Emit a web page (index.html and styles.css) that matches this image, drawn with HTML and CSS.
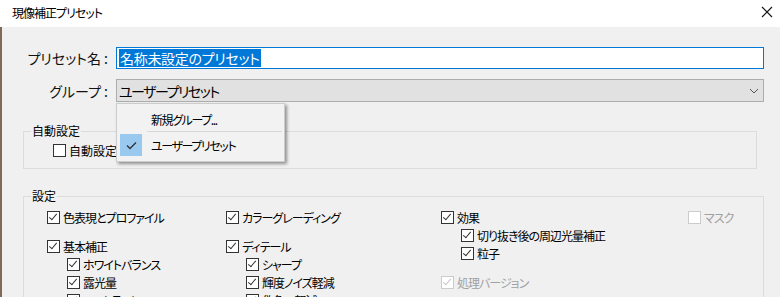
FILE: index.html
```html
<!DOCTYPE html>
<html>

<head>
  <meta charset="utf-8">
  <title>現像補正プリセット</title>
  <link rel="stylesheet" href="styles.css">
</head>

<body>
  <div class="titlebar">
    <span class="title">現像補正プリセット</span>
    <svg class="close" width="12" height="12" viewBox="0 0 12 12">
      <path d="M1 1 L11 11 M11 1 L1 11" stroke="#111" stroke-width="1.1" fill="none" />
    </svg>
  </div>

  <div class="content">
    <div class="form-row row-name">
      <span class="form-label">プリセット名 :</span>
      <div class="field field-input"><span class="selected">名称未設定のプリセット</span></div>
    </div>

    <div class="form-row row-group">
      <span class="form-label">グループ :</span>
      <div class="field field-select">
        <span>ユーザープリセット</span>
        <svg class="chevron" width="10" height="6" viewBox="0 0 10 6">
          <path d="M1 1 L5 5 L9 1" stroke="#555" stroke-width="1" fill="none" />
        </svg>
      </div>

      <div class="menu">
        <div class="menu-item"><span class="menu-mark"></span>新規グループ...</div>
        <div class="menu-sep"></div>
        <div class="menu-item">
          <span class="menu-mark active">
            <svg width="11" height="9" viewBox="0 0 11 9">
              <path d="M1 4.5 L4 7.5 L10 1.5" stroke="#333" stroke-width="1.3" fill="none" />
            </svg>
          </span>ユーザープリセット
        </div>
      </div>
    </div>

    <fieldset class="group group-auto">
      <legend>自動設定</legend>
      <label class="check"><span class="cb"></span>自動設定</label>
    </fieldset>

    <fieldset class="group group-settings">
      <legend>設定</legend>
      <div class="cols">
        <div class="col col-1">
          <label class="check"><span class="cb on"></span>色表現とプロファイル</label>
          <label class="check top-gap"><span class="cb on"></span>基本補正</label>
          <label class="check sub"><span class="cb on"></span>ホワイトバランス</label>
          <label class="check sub"><span class="cb on"></span>露光量</label>
          <label class="check sub"><span class="cb on"></span>コントラスト</label>
        </div>
        <div class="col col-2">
          <label class="check"><span class="cb on"></span>カラーグレーディング</label>
          <label class="check top-gap"><span class="cb on"></span>ディテール</label>
          <label class="check sub"><span class="cb on"></span>シャープ</label>
          <label class="check sub"><span class="cb on"></span>輝度ノイズ軽減</label>
          <label class="check sub"><span class="cb on"></span>偽色の軽減</label>
        </div>
        <div class="col col-3">
          <label class="check"><span class="cb on"></span>効果</label>
          <label class="check sub"><span class="cb on"></span>切り抜き後の周辺光量補正</label>
          <label class="check sub"><span class="cb on"></span>粒子</label>
          <label class="check top-gap disabled"><span class="cb on"></span>処理バージョン</label>
        </div>
        <div class="col col-4">
          <label class="check disabled"><span class="cb"></span>マスク</label>
        </div>
      </div>
    </fieldset>
  </div>
</body>

</html>
```

FILE: styles.css
```css
body {
  margin: 0;
  width: 780px;
  height: 297px;
  overflow: hidden;
  background-color: #f0f0f0;
  font-family: "Noto Sans CJK JP", "Noto Sans", sans-serif;
  font-feature-settings: "palt";
  font-size: 12px;
  color: #000;
}

.titlebar {
  height: 27px;
  background-color: #fff;
  display: flex;
  align-items: center;
  justify-content: space-between;
  padding: 0 7px 0 12px;
}

.title {
  font-size: 12px;
  letter-spacing: -1px;
  margin-top: -2px;
}

.close {
  margin-top: -3px;
}

.content {
  border-left: 2px solid #7d6b58;
  height: 270px;
  overflow: hidden;
}

.form-row {
  display: flex;
  align-items: center;
  position: relative;
}

.row-name {
  margin-top: 20px;
}

.row-group {
  margin-top: 10px;
}

.form-label {
  width: 106px;
  text-align: right;
  margin-right: 8px;
  font-size: 14px;
  color: #111;
}

.field {
  height: 20px;
  display: flex;
  align-items: center;
  font-size: 14px;
}

.field-input {
  background-color: #fff;
  border: 1px solid #0078d7;
  padding-left: 2px;
  width: 644px;
  letter-spacing: -0.3px;
}

.selected {
  background-color: #0078d7;
  color: #fff;
  line-height: 18px;
  padding: 0 1px;
}

.field-select {
  background-color: #e1e1e1;
  border: 1px solid #adadad;
  height: 21px;
  padding-left: 2px;
  width: 644px;
  justify-content: space-between;
  letter-spacing: -1.5px;
}

.chevron {
  margin-right: 4px;
}

.menu {
  position: absolute;
  left: 114px;
  top: 24px;
  width: 167px;
  height: 57px;
  background-color: #f2f2f2;
  border: 1px solid #cccccc;
  box-shadow: 2px 2px 3px rgba(0, 0, 0, 0.4);
  z-index: 2;
}

.menu-item {
  display: flex;
  align-items: center;
  height: 24px;
  font-size: 12px;
  letter-spacing: -1.4px;
}

.menu-item:first-child {
  margin-top: 3px;
}

.menu-mark {
  width: 22px;
  height: 22px;
  margin: 0 9px 0 3px;
  display: flex;
  align-items: center;
  justify-content: center;
}

.menu-mark.active {
  background-color: #99c9ef;
}

.menu-sep {
  height: 1px;
  background-color: #d7d7d7;
  margin: 0 2px 1px 30px;
}

.group {
  box-sizing: border-box;
  margin: 0 0 0 21px;
  padding: 0 0 0 7px;
  border: 1px solid #dcdcdc;
  min-width: 0;
}

.group legend {
  padding: 0 1px;
  font-size: 12px;
  line-height: 14px;
}

.group-auto {
  margin-top: 22px;
  width: 734px;
  height: 45px;
}

.group-auto .check {
  margin: 3px 0 0 22px;
  letter-spacing: 0;
}

.group-settings {
  margin-top: 20px;
  width: 741px;
  height: 140px;
}

.cols {
  display: flex;
  margin-top: 5px;
}

.col {
  display: flex;
  flex-direction: column;
}

.col-1 {
  width: 179px;
  margin-left: 16px;
}

.col-2 {
  width: 215px;
}

.col-3 {
  width: 247px;
}

.check {
  display: flex;
  align-items: center;
  height: 18px;
  white-space: nowrap;
  font-size: 12px;
  letter-spacing: -1px;
}

.check.sub {
  margin-left: 20px;
}

.check.top-gap {
  margin-top: 11px;
}

.cb {
  width: 11px;
  height: 11px;
  border: 1px solid #333;
  background-color: #fff;
  margin-right: 3px;
  flex: none;
  position: relative;
}

.cb.on::after {
  content: "";
  position: absolute;
  left: 3px;
  top: 0px;
  width: 3px;
  height: 7px;
  border-right: 1.3px solid #333;
  border-bottom: 1.3px solid #333;
  transform: rotate(40deg);
}

.disabled {
  color: #a0a0a0;
}

.disabled .cb {
  border-color: #cccccc;
}

.disabled .cb.on::after {
  border-color: #c4c4c4;
}
```
